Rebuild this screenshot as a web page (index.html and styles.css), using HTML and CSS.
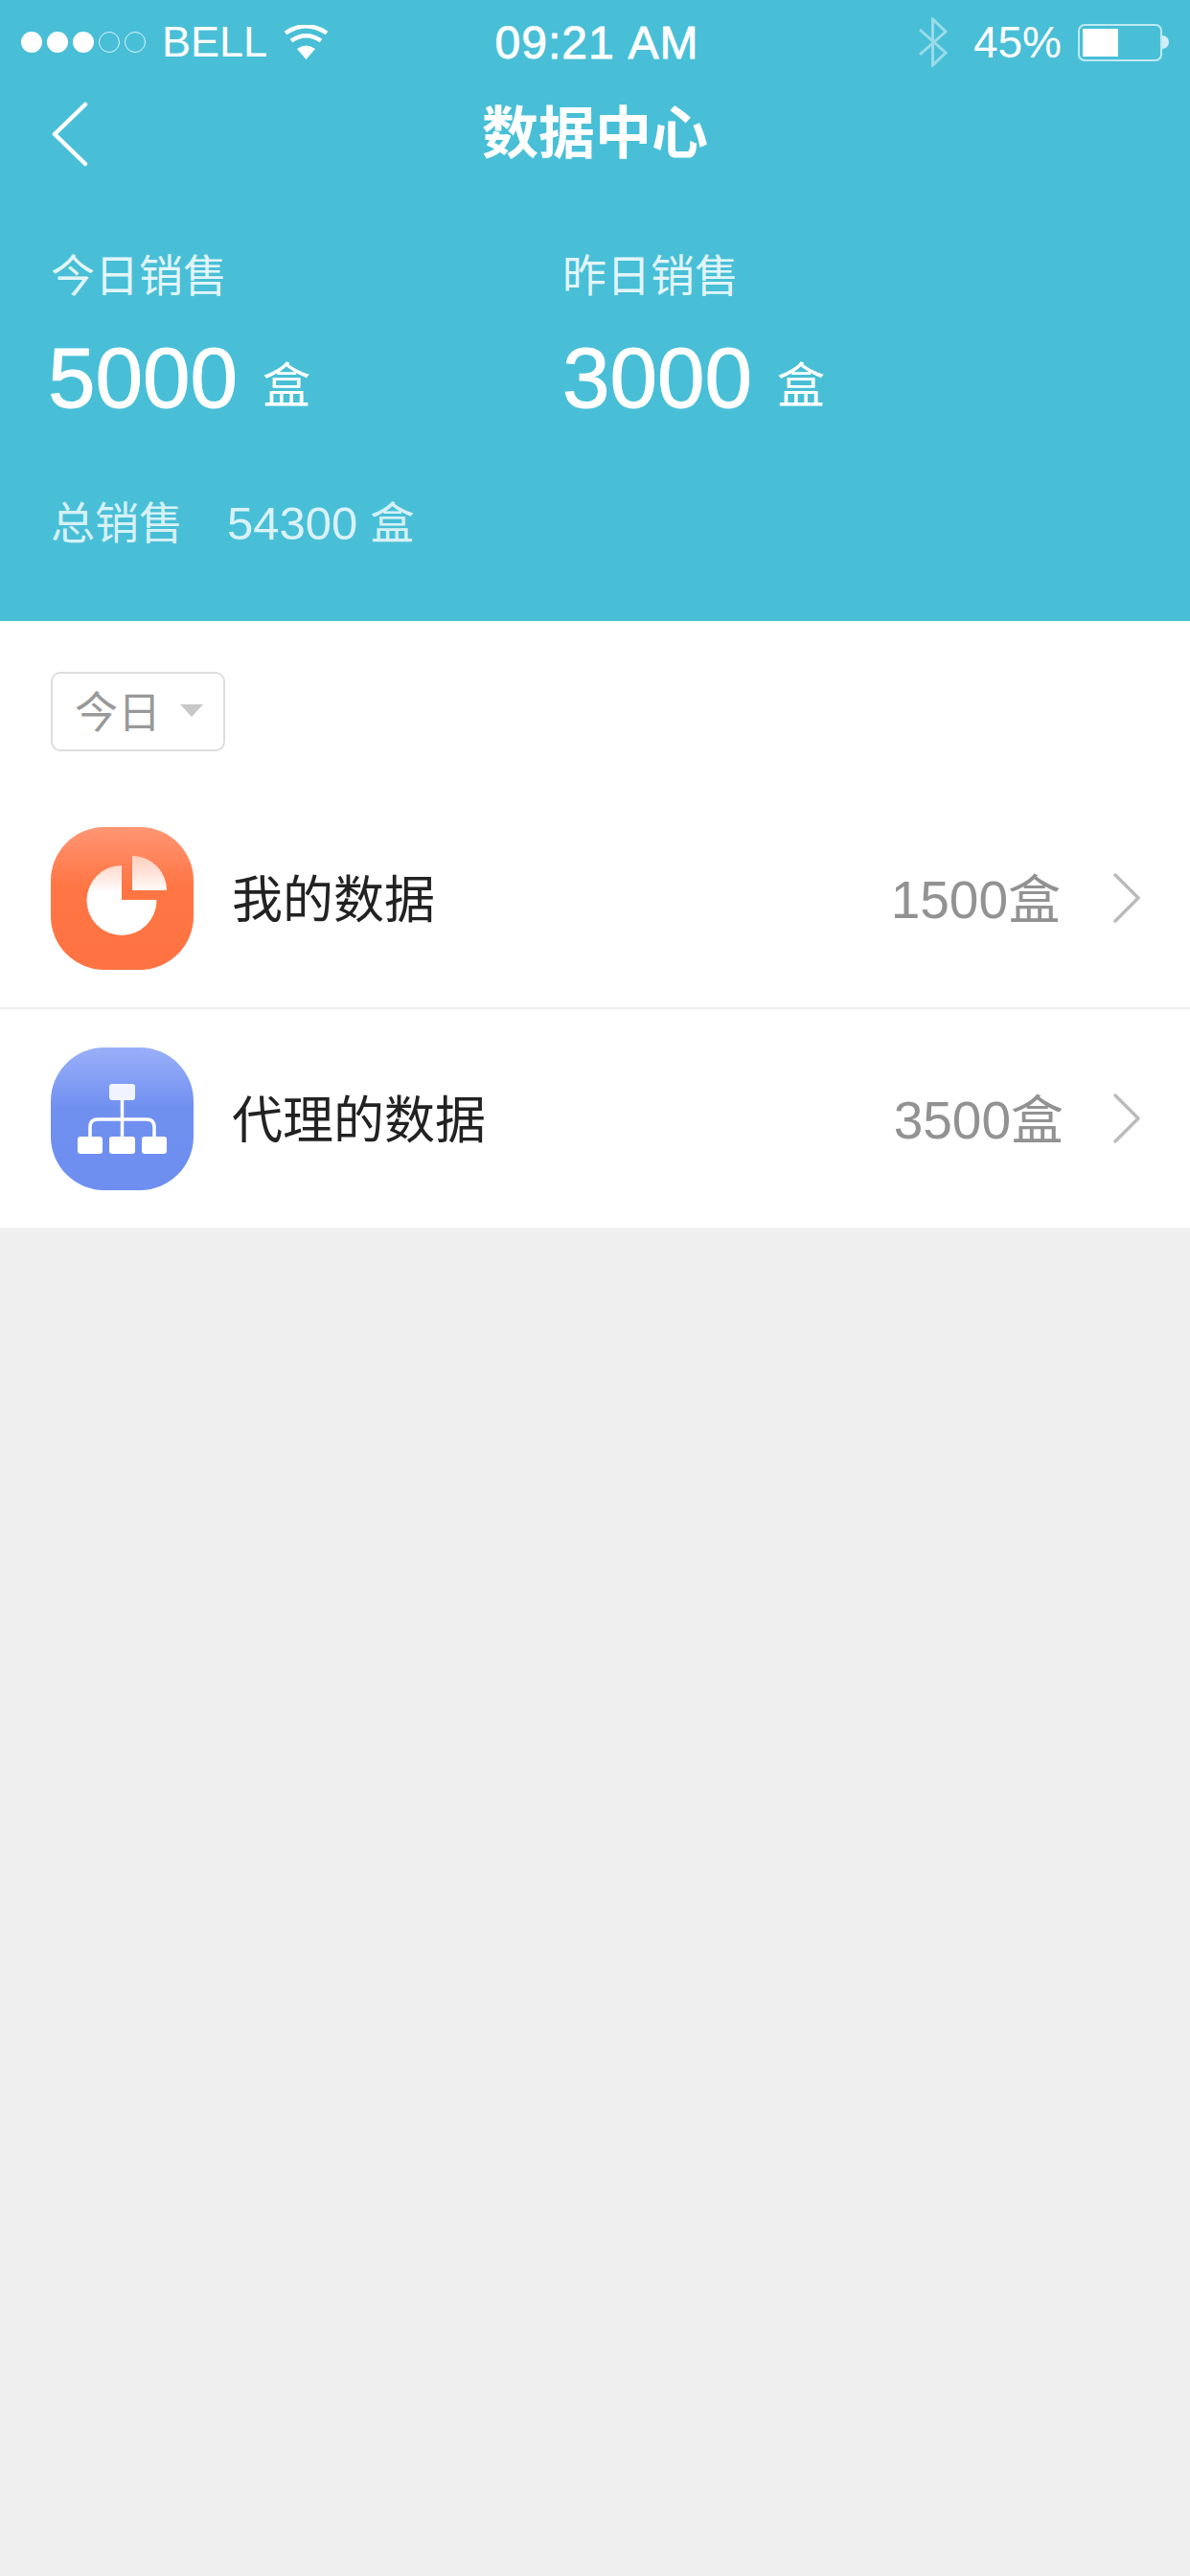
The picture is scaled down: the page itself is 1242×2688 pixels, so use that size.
FILE: index.html
```html
<!DOCTYPE html>
<html lang="zh-CN">
<head>
    <meta charset="UTF-8">
    <title>数据中心</title>
    <meta name="viewport" content="width=device-width, initial-scale=1.0">
    <link rel="stylesheet" href="styles.css">
</head>
<body>
    <header class="top">
        <div class="status">
            <div class="status-left">
                <div class="dots">
                    <span class="dot"></span>
                    <span class="dot"></span>
                    <span class="dot"></span>
                    <span class="dot dot-empty"></span>
                    <span class="dot dot-empty"></span>
                </div>
                <span class="carrier">BELL</span>
                <svg class="wifi" width="47" height="36" viewBox="0 0 47 36">
                    <path d="M2 8.5Q23.5-6 45 8.5M8 16.5Q23.5 6 39 16.5" fill="none" stroke="#fff" stroke-width="4.5"/>
                    <path d="M23.5 36L14 25Q23.5 18 33 25Z" fill="#fff"/>
                </svg>
            </div>
            <span class="time">09:21 AM</span>
            <div class="status-right">
                <svg class="bluetooth" width="30" height="52" viewBox="0 0 30 52">
                    <path d="M1 13L28 37L14.500 50V2L28 15L1 39" fill="none" stroke="#fff" stroke-width="3"/>
                </svg>
                <span class="percent">45%</span>
                <div class="battery">
                    <div class="battery-body"><div class="battery-fill"></div></div>
                    <div class="battery-nub"></div>
                </div>
            </div>
        </div>

        <nav class="nav">
            <svg class="back" width="40" height="68" viewBox="0 0 40 68">
                <path d="M36 3L4 34L36 65" fill="none" stroke="#fff" stroke-width="4.500" stroke-linecap="round" stroke-linejoin="round"/>
            </svg>
            <h1>数据中心</h1>
        </nav>

        <div class="stats">
            <div class="stat">
                <div class="stat-label">今日销售</div>
                <div class="stat-value">5000<span class="stat-unit">盒</span></div>
            </div>
            <div class="stat">
                <div class="stat-label">昨日销售</div>
                <div class="stat-value">3000<span class="stat-unit">盒</span></div>
            </div>
        </div>

        <div class="total">
            <span class="total-label">总销售</span>
            <span class="total-num">54300</span>
            <span>盒</span>
        </div>
    </header>

    <main class="panel">
        <div class="filter">
            <span class="filter-text">今日</span>
            <span class="caret"></span>
        </div>

        <div class="row">
            <svg class="row-icon" width="149" height="149" viewBox="0 0 149 149">
                <defs>
                    <linearGradient id="orange" x1="0" y1="0" x2="0" y2="1">
                        <stop offset="0" stop-color="#ff9673"/>
                        <stop offset="0.42" stop-color="#ff7544"/>
                        <stop offset="1" stop-color="#ff7342"/>
                    </linearGradient>
                    <linearGradient id="pie" gradientUnits="userSpaceOnUse" x1="0" y1="30" x2="0" y2="68">
                        <stop offset="0" stop-color="#fff" stop-opacity="0.6"/>
                        <stop offset="1" stop-color="#fff"/>
                    </linearGradient>
                </defs>
                <rect width="149" height="149" rx="56" fill="url(#orange)"/>
                <path d="M74 40V76H110.500A36.500 36.500 0 1 1 74 40Z" fill="url(#pie)"/>
                <path d="M85 30A36 36 0 0 1 121 66H85Z" fill="url(#pie)"/>
            </svg>
            <span class="row-title">我的数据</span>
            <span class="row-value">1500盒</span>
            <svg class="chevron" width="28" height="52" viewBox="0 0 28 52">
                <path d="M2 2L26 26L2 50" fill="none" stroke="#bbb" stroke-width="3.500" stroke-linecap="round" stroke-linejoin="round"/>
            </svg>
        </div>

        <div class="row">
            <svg class="row-icon" width="149" height="149" viewBox="0 0 149 149">
                <defs>
                    <linearGradient id="blue" x1="0" y1="0" x2="0" y2="1">
                        <stop offset="0" stop-color="#9aaff9"/>
                        <stop offset="0.42" stop-color="#7090f0"/>
                        <stop offset="1" stop-color="#6e8ef0"/>
                    </linearGradient>
                </defs>
                <rect width="149" height="149" rx="56" fill="url(#blue)"/>
                <path d="M74.500 55V93M41 93V83Q41 75 49 75H100Q108 75 108 83V93" fill="none" stroke="#fff" stroke-width="3.500"/>
                <rect x="61" y="38" width="27" height="17" rx="3" fill="#f1f4fe"/>
                <rect x="28" y="93" width="26" height="18" rx="3" fill="#fff"/>
                <rect x="61" y="93" width="27" height="18" rx="3" fill="#fff"/>
                <rect x="95" y="93" width="26" height="18" rx="3" fill="#fff"/>
            </svg>
            <span class="row-title">代理的数据</span>
            <span class="row-value row-value-agent">3500盒</span>
            <svg class="chevron" width="28" height="52" viewBox="0 0 28 52">
                <path d="M2 2L26 26L2 50" fill="none" stroke="#bbb" stroke-width="3.500" stroke-linecap="round" stroke-linejoin="round"/>
            </svg>
        </div>
    </main>
</body>
</html>
```

FILE: styles.css
```css
* { box-sizing: border-box; }
html, body { margin: 0; }
body { min-height: 2688px; background: #efefef; font-family: "Liberation Sans", "Noto Sans CJK SC", sans-serif; }

.top { background: #48bfd7; color: #fff; padding-bottom: 72px; }

.status { display: grid; grid-template-columns: 1fr auto 1fr; align-items: center; height: 88px; padding: 0 22px; }
.status-left { display: flex; align-items: center; }
.dots { display: flex; gap: 5px; margin-right: 17px; }
.dot { width: 22px; height: 22px; border-radius: 50%; background: #fff; }
.dot-empty { background: none; border: 1.5px solid rgba(255, 255, 255, 0.8); }
.carrier { font-size: 45px; margin-right: 17px; }
.wifi { margin-top: -1px; }
.time { padding-left: 4px; font-size: 48px; word-spacing: 2px; letter-spacing: 1px; -webkit-text-stroke: 0.8px #fff; }
.status-right { display: flex; align-items: center; justify-content: flex-end; }
.bluetooth { opacity: 0.45; margin-right: 27px; }
.percent { font-size: 46px; margin-right: 17px; }
.battery { display: flex; align-items: center; }
.battery-body { width: 88px; height: 39px; padding: 3px; border: 2px solid rgba(255, 255, 255, 0.65); border-radius: 7px; }
.battery-fill { width: 37px; height: 100%; background: #fff; }
.battery-nub { width: 7px; height: 14px; background: rgba(255, 255, 255, 0.75); border-radius: 0 7px 7px 0; }

.nav { display: grid; grid-template-columns: 1fr auto 1fr; align-items: center; height: 104px; padding-left: 53px; padding-right: 53px; }
.nav h1 { margin: 0; font-size: 59px; font-weight: 700; line-height: 104px; }

.stats { display: grid; grid-template-columns: 534px 1fr; padding: 66px 0 0 50px; }
.stat-label { margin-left: 3px; font-size: 46px; line-height: 60px; color: rgba(255, 255, 255, 0.85); }
.stat-value { margin-top: 26px; font-size: 89px; line-height: 100px; -webkit-text-stroke: 1px #fff; }
.stat + .stat .stat-value { margin-left: 3px; }
.stat-unit { margin-left: 26px; font-size: 50px; line-height: 1; vertical-align: 5px; -webkit-text-stroke: 0; }

.total { display: flex; margin-top: 72px; padding-left: 53px; font-size: 46px; line-height: 60px; color: rgba(255, 255, 255, 0.8); }
.total-label { margin-right: 46px; }
.total-num { margin-right: 13px; font-size: 49px; }

.panel { background: #fff; padding-top: 53px; }
.filter { display: flex; align-items: center; width: 182px; height: 83px; margin-left: 53px; margin-bottom: 39px; padding-left: 23px; border: 2px solid #ddd; border-radius: 10px; font-size: 45px; color: #999; }
.filter-text { margin-bottom: 5px; }
.caret { margin-left: 20px; margin-bottom: 2px; border-style: solid; border-width: 13px 12px 0; border-color: #c8c8c8 transparent transparent; }

.row { display: flex; align-items: center; height: 230px; padding: 0 52px 0 53px; border-bottom: 2px solid #eee; }
.row:last-child { border-bottom: 0; height: 228px; }
.row-icon { flex: none; }
.row-title { flex: 1; margin-left: 40px; margin-bottom: 5px; font-size: 53px; color: #222; }
.row-value { margin-right: 55px; margin-bottom: 7px; font-size: 55px; color: #929292; }
.row-value-agent { margin-right: 52px; }
```
